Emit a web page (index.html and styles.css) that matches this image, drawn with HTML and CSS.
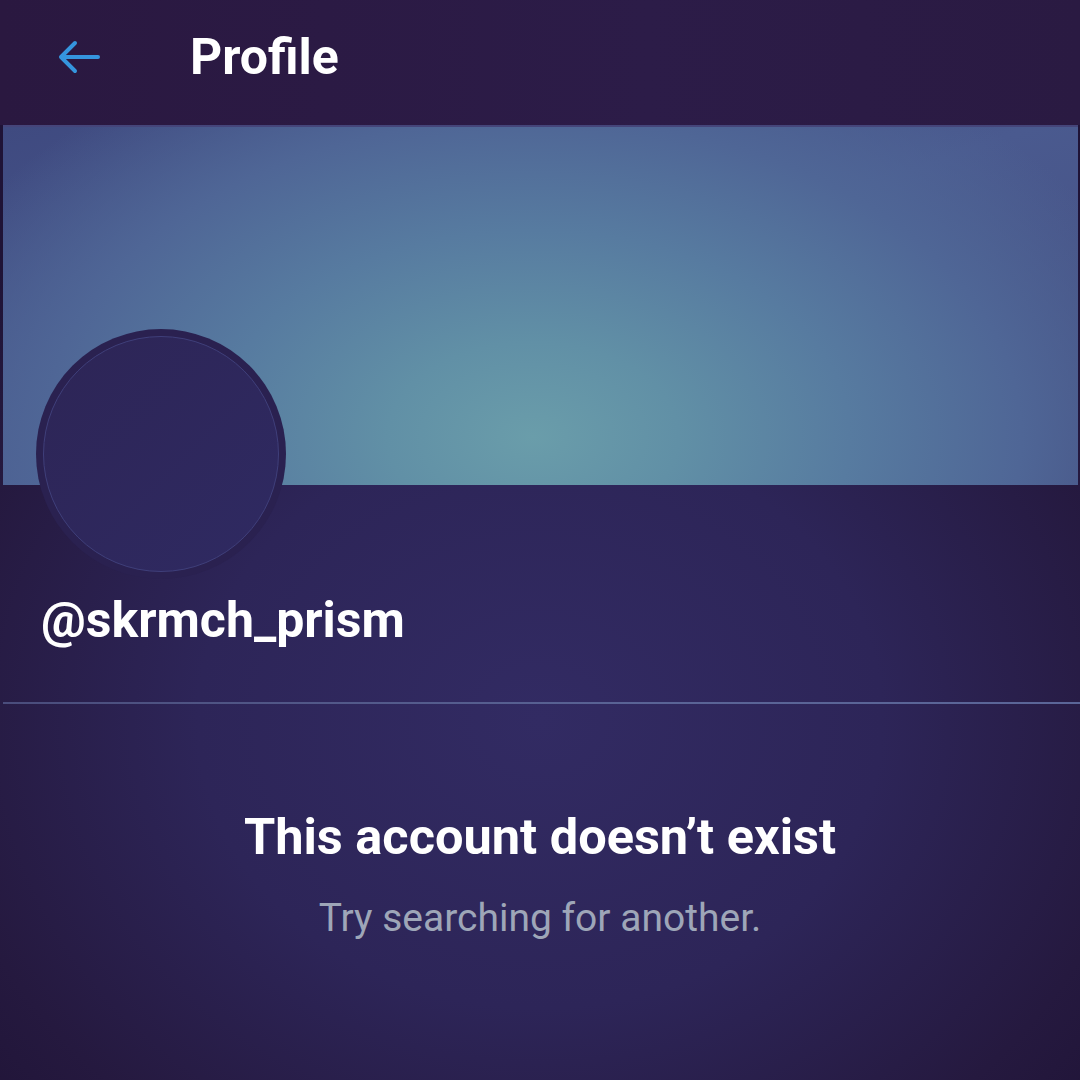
FILE: index.html
```html
<!DOCTYPE html>
<html>
<head>
<meta charset="utf-8">
<link rel="stylesheet" href="styles.css">
</head>
<body>
<div class="screen">
  <header class="topbar">
    <svg class="back" width="44" height="44" viewBox="0 0 44 44" aria-hidden="true">
      <path d="M41 22 H5 M18 8 L4 22 L18 36" fill="none" stroke="#3595de" stroke-width="4" stroke-linecap="round" stroke-linejoin="round"/>
    </svg>
    <h1 class="title">Profile</h1>
  </header>
  <div class="banner"></div>
  <section class="identity">
    <div class="avatar"><div class="avatar-inner"></div></div>
    <div class="handle">@skrmch_prism</div>
  </section>
  <div class="divider"></div>
  <section class="empty">
    <h2 class="empty-title">This account doesn’t exist</h2>
    <p class="empty-sub">Try searching for another.</p>
  </section>
</div>
</body>
</html>
```

FILE: styles.css
```css
html, body {
  margin: 0;
  padding: 0;
  width: 1080px;
  height: 1080px;
  overflow: hidden;
  font-family: Roboto, "Noto Sans", sans-serif;
}
.screen {
  width: 1080px;
  height: 1080px;
  background:
    radial-gradient(ellipse 760px 640px at 540px 720px, #322b63 0%, #2d2558 45%, #25193f 80%, #1f1336 100%);
  display: flex;
  flex-direction: column;
}
.topbar {
  height: 125px;
  flex: none;
  display: flex;
  align-items: center;
  padding-left: 57px;
  padding-bottom: 12px;
  box-sizing: border-box;
  background: linear-gradient(90deg, #2a1840 0%, #2c1c48 60%, #2a1a42 100%);
}
.back {
  width: 44px;
  height: 44px;
  flex: none;
}
.title {
  margin: 0 0 0 89px;
  color: #ffffff;
  font-size: 50px;
  font-weight: 700;
}
.banner {
  flex: none;
  height: 358px;
  margin: 0 2px 0 3px;
  border-top: 2px solid #45457a;
  background:
    radial-gradient(ellipse 660px 430px at 530px 310px, #6a9daa 0%, #6190a6 22%, #577ba0 48%, #4f6696 74%, rgba(76,90,140,0) 100%),
    linear-gradient(160deg, #3f4a80 0%, #4a5a8f 50%, #444c7e 100%);
}
.identity {
  padding-left: 36px;
  display: flex;
  flex-direction: column;
}
.avatar {
  width: 250px;
  height: 250px;
  margin-top: -156px;
  border-radius: 50%;
  background: #2a2150;
  display: flex;
  align-items: center;
  justify-content: center;
}
.avatar-inner {
  width: 236px;
  height: 236px;
  border-radius: 50%;
  box-sizing: border-box;
  border: 1.5px solid #3f3f7a;
  background: linear-gradient(135deg, #2d2556 0%, #2f2a62 100%);
}
.handle {
  margin-top: 10px;
  margin-left: 5px;
  color: #ffffff;
  font-size: 50px;
  font-weight: 700;
  line-height: 62px;
}
.divider {
  margin: 51px 0 0 3px;
  height: 2px;
  background: linear-gradient(90deg, #4a4d7c 0%, #5a6496 60%, #5b6698 100%);
}
.empty {
  display: flex;
  flex-direction: column;
  align-items: center;
  padding-top: 105px;
}
.empty-title {
  margin: 0;
  color: #ffffff;
  font-size: 50.5px;
  font-weight: 700;
  line-height: 56px;
}
.empty-sub {
  margin: 31px 0 0;
  color: #9ea6b8;
  font-size: 39px;
  font-weight: 400;
  line-height: 44px;
}
```
